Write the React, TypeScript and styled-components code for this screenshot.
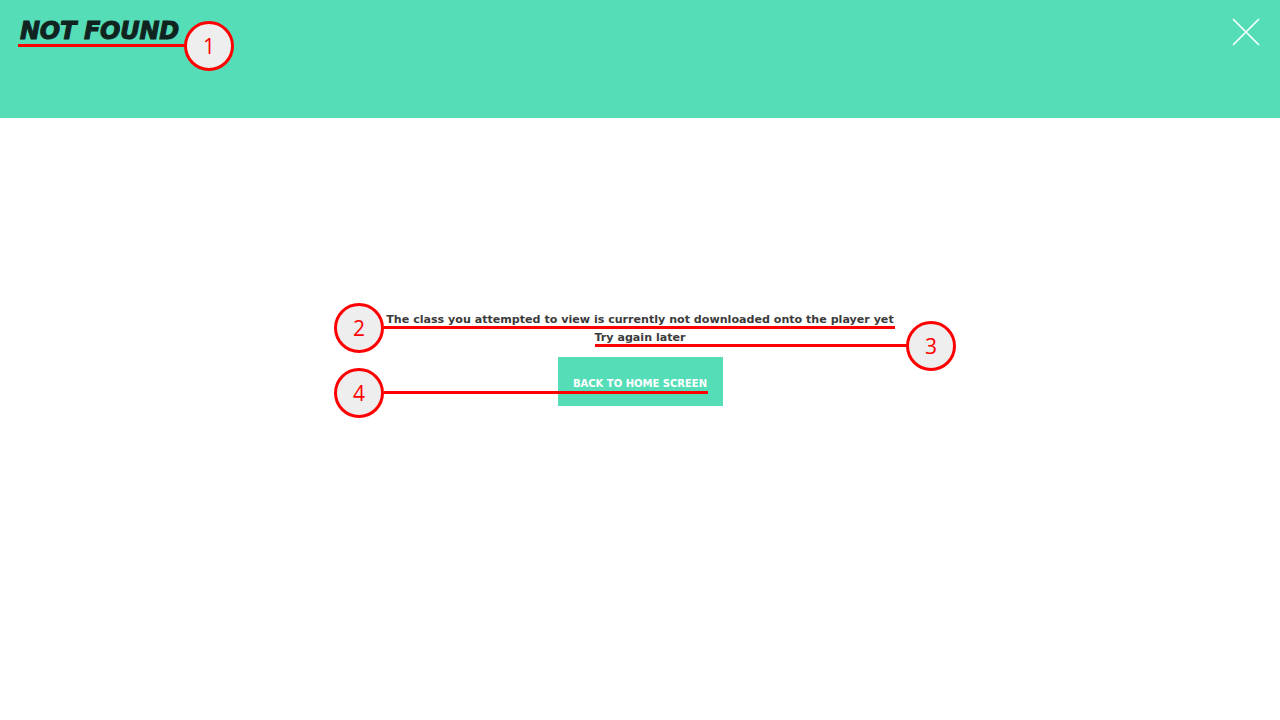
import React from "react";
import styled, { createGlobalStyle } from "styled-components";

const GlobalStyle = createGlobalStyle`
  html, body {
    margin: 0;
    padding: 0;
    background: #ffffff;
    font-family: "DejaVu Sans", "Open Sans", sans-serif;
  }
`;

const Page = styled.div`
  position: relative;
  width: 1280px;
  height: 720px;
  overflow: hidden;
  background: #ffffff;
`;

const Header = styled.header`
  height: 118px;
  background: #55ddb8;
  display: flex;
  justify-content: space-between;
  align-items: flex-start;
  padding: 0 20px 0 20px;
  box-sizing: border-box;
`;

const Title = styled.h1`
  margin: 17px 0 0 0;
  font-family: "DejaVu Sans", sans-serif;
  font-size: 24px;
  font-weight: 900;
  font-style: italic;
  letter-spacing: -0.3px;
  color: #10231f;
  -webkit-text-stroke: 1px #10231f;
`;

const CloseBtn = styled.button`
  margin-top: 18px;
  width: 28px;
  height: 28px;
  padding: 0;
  border: none;
  background: transparent;
  cursor: pointer;
`;

const Main = styled.main`
  display: flex;
  flex-direction: column;
  align-items: center;
  padding-top: 193px;
`;

const Message = styled.p`
  margin: 0;
  font-family: "DejaVu Sans", sans-serif;
  font-size: 11.1px;
  font-weight: bold;
  line-height: 18px;
  color: #3b3b3b;
  text-align: center;
`;

const HomeButton = styled.button`
  margin-top: 10px;
  width: 165px;
  height: 49px;
  padding: 4px 0 0 0;
  border: none;
  background: #55ddb8;
  color: #ffffff;
  font-family: "DejaVu Sans", sans-serif;
  font-size: 10px;
  font-weight: 600;
  text-transform: uppercase;
  cursor: pointer;
`;

/* annotation overlay */
const Marker = styled.div<{ $x: number; $y: number }>`
  position: absolute;
  left: ${(p) => p.$x - 25}px;
  top: ${(p) => p.$y - 25}px;
  width: 44px;
  height: 44px;
  border: 3px solid #ff0000;
  border-radius: 50%;
  background: #eeeeee;
  color: #ff0000;
  font-family: "Open Sans", "DejaVu Sans", sans-serif;
  font-size: 21px;
  display: flex;
  align-items: center;
  justify-content: center;
`;

const Rule = styled.div<{ $x1: number; $x2: number; $y: number }>`
  position: absolute;
  left: ${(p) => p.$x1}px;
  top: ${(p) => p.$y - 1}px;
  width: ${(p) => p.$x2 - p.$x1}px;
  height: 3px;
  background: #ff0000;
`;

const notes = [
  { n: 1, cx: 209, cy: 46, x1: 18, x2: 186, y: 45 },
  { n: 2, cx: 359, cy: 328, x1: 384, x2: 895, y: 327 },
  { n: 3, cx: 931, cy: 346, x1: 595, x2: 908, y: 345 },
  { n: 4, cx: 359, cy: 393, x1: 384, x2: 708, y: 392 },
];

export default function App() {
  return (
    <Page>
      <GlobalStyle />
      <Header>
        <Title>NOT FOUND</Title>
        <CloseBtn aria-label="close">
          <svg width="28" height="28" viewBox="0 0 28 28">
            <path d="M1 1 L27 27 M27 1 L1 27" stroke="#ffffff" strokeWidth="1.6" />
          </svg>
        </CloseBtn>
      </Header>
      <Main>
        <Message>
          The class you attempted to view is currently not downloaded onto the player yet
          <br />
          Try again later
        </Message>
        <HomeButton>Back to home screen</HomeButton>
      </Main>
      {notes.map((a) => (
        <React.Fragment key={a.n}>
          <Rule $x1={a.x1} $x2={a.x2} $y={a.y} />
          <Marker $x={a.cx} $y={a.cy}>{a.n}</Marker>
        </React.Fragment>
      ))}
    </Page>
  );
}
